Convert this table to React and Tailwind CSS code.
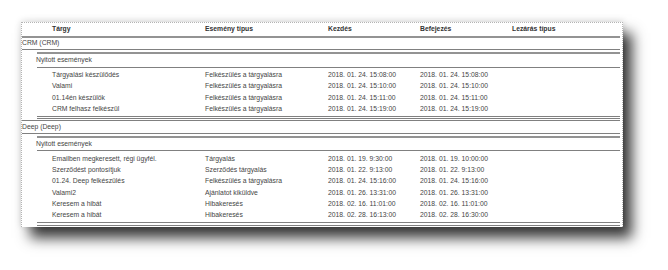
const crmRows = [
  ["Tárgyalási készülődés", "Felkészülés a tárgyalásra", "2018. 01. 24. 15:08:00", "2018. 01. 24. 15:08:00"],
  ["Valami", "Felkészülés a tárgyalásra", "2018. 01. 24. 15:10:00", "2018. 01. 24. 15:10:00"],
  ["01.14én készülök", "Felkészülés a tárgyalásra", "2018. 01. 24. 15:11:00", "2018. 01. 24. 15:11:00"],
  ["CRM felhasz felkészül", "Felkészülés a tárgyalásra", "2018. 01. 24. 15:19:00", "2018. 01. 24. 15:19:00"]
];

const deepRows = [
  ["Emailben megkeresett, régi ügyfél.", "Tárgyalás", "2018. 01. 19. 9:30:00", "2018. 01. 19. 10:00:00"],
  ["Szerződést pontosítjuk", "Szerződés tárgyalás", "2018. 01. 22. 9:13:00", "2018. 01. 22. 9:13:00"],
  ["01.24. Deep felkészülés", "Felkészülés a tárgyalásra", "2018. 01. 24. 15:16:00", "2018. 01. 24. 15:16:00"],
  ["Valami2", "Ajánlatot kiküldve", "2018. 01. 26. 13:31:00", "2018. 01. 26. 13:31:00"],
  ["Keresem a hibát", "Hibakeresés", "2018. 02. 16. 11:01:00", "2018. 02. 16. 11:01:00"],
  ["Keresem a hibát", "Hibakeresés", "2018. 02. 28. 16:13:00", "2018. 02. 28. 16:30:00"]
];

const Line = ({ indent, thick }) => (
  <div
    className={
      (indent ? "ml-[15px] " : "") +
      (thick ? "h-[2px] bg-[#939393] " : "h-px bg-[#808080] ") +
      "mr-[2px]"
    }
  />
);

const Cells = ({ cells, bold }) => (
  <div className={"flex items-center pl-[30px] h-full " + (bold ? "font-bold text-[#333333]" : "text-[#454545]")}>
    <span className="w-[153px] shrink-0 whitespace-nowrap">{cells[0]}</span>
    <span className="w-[123px] shrink-0 whitespace-nowrap">{cells[1]}</span>
    <span className="w-[92px] shrink-0 whitespace-nowrap">{cells[2]}</span>
    <span className="w-[92px] shrink-0 whitespace-nowrap">{cells[3]}</span>
    <span className="whitespace-nowrap">{cells[4]}</span>
  </div>
);

const Group = ({ label, rows, first }) => (
  <>
    {!first && (
      <>
        <div className="h-px" />
        <Line />
        <div className="h-px" />
      </>
    )}
    <div className="h-[11px] flex items-center text-[#454545]">{label}</div>
    <Line />
    <div className="h-[2px]" />
    <Line indent thick />
    <div className="h-[12.5px] flex items-center pl-[14px] text-[#454545]">
      Nyitott események
    </div>
    <Line indent />
    <div className="h-[2.5px]" />
    {rows.map((r, i) => (
      <div key={i} className="h-[11.2px]">
        <Cells cells={r} />
      </div>
    ))}
    <div className="h-px" />
    <Line indent />
    <div className={first ? "h-px" : "h-[2px]"} />
    <Line indent />
  </>
);

export default function App() {
  return (
    <div className="w-[668px] h-[270px] bg-white pt-[22px] pl-[21px] overflow-hidden">
      <div
        className="w-[602px] h-[205px] bg-white border-t border-l border-r border-dotted border-[#b4b4b4] shadow-[9px_11px_13px_rgba(0,0,0,0.78),0_-1px_7px_rgba(0,0,0,0.14)] text-[6.8px] leading-none"
        style={{ fontFamily: '"Liberation Sans", Arial, sans-serif' }}
      >
        <div className="h-[13px]">
          <Cells cells={["Tárgy", "Esemény típus", "Kezdés", "Befejezés", "Lezárás típus"]} bold />
        </div>
        <Line thick />
        <Group label="CRM (CRM)" rows={crmRows} first />
        <Group label="Deep (Deep)" rows={deepRows} />
      </div>
    </div>
  );
}
